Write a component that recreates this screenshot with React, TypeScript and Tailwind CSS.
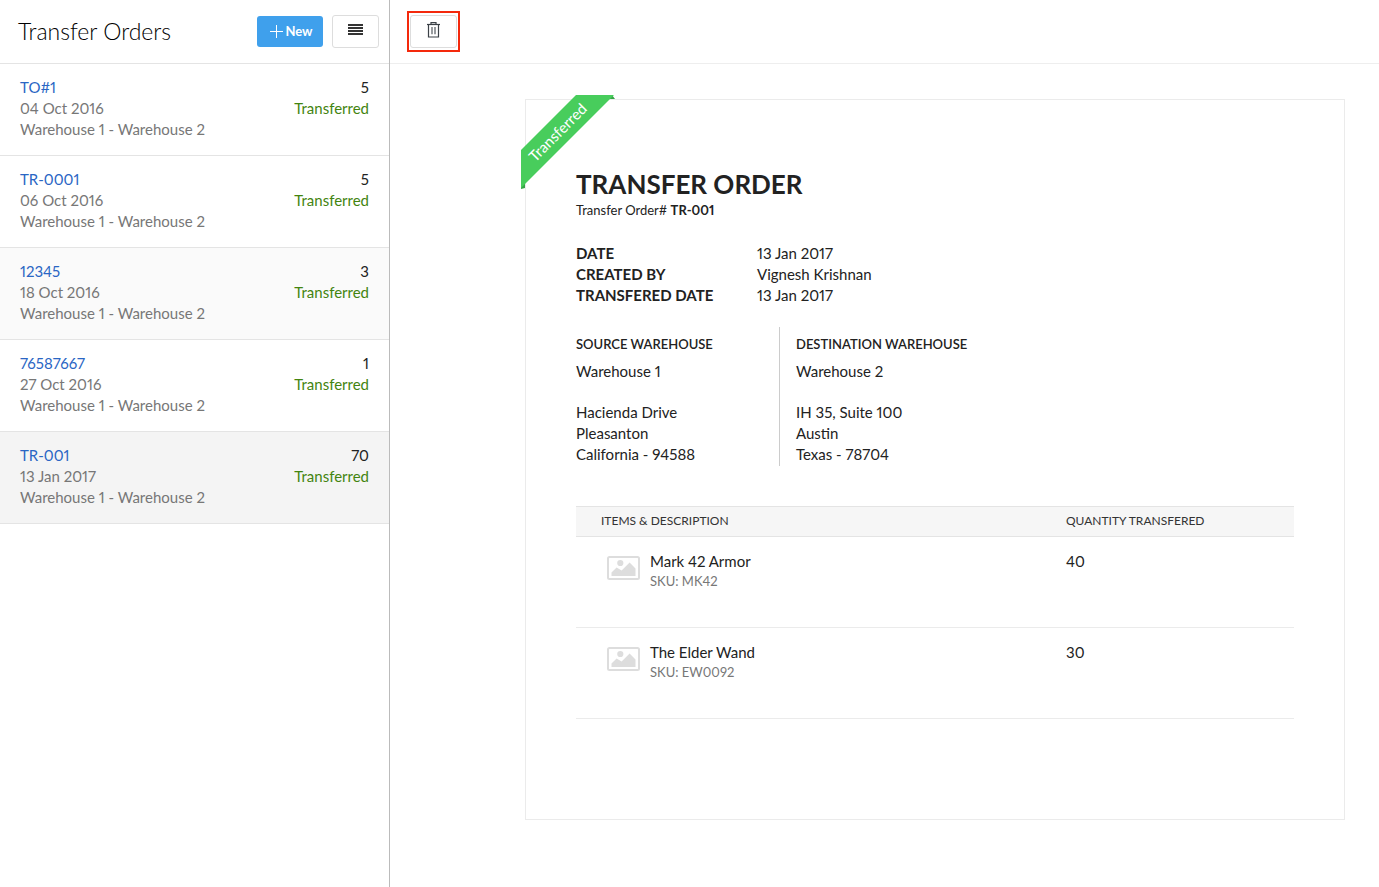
type Order = {
  id: string;
  date: string;
  quantity: number;
  rowClass: string;
};

const orders: Order[] = [
  { id: 'TO#1', date: '04 Oct 2016', quantity: 5, rowClass: 'bg-white' },
  { id: 'TR-0001', date: '06 Oct 2016', quantity: 5, rowClass: 'bg-white' },
  { id: '12345', date: '18 Oct 2016', quantity: 3, rowClass: 'bg-[#fafafa]' },
  { id: '76587667', date: '27 Oct 2016', quantity: 1, rowClass: 'bg-white' },
  { id: 'TR-001', date: '13 Jan 2017', quantity: 70, rowClass: 'bg-[#f4f4f4]' },
];

const details = [
  { label: 'DATE', value: '13 Jan 2017' },
  { label: 'CREATED BY', value: 'Vignesh Krishnan' },
  { label: 'TRANSFERED DATE', value: '13 Jan 2017' },
];

const items = [
  { name: 'Mark 42 Armor', sku: 'MK42', quantity: 40 },
  { name: 'The Elder Wand', sku: 'EW0092', quantity: 30 },
];

function PlusIcon() {
  return (
    <svg width="14" height="14" viewBox="0 0 14 14" aria-hidden="true">
      <path d="M7.5 0V13M1 6.5H14" stroke="#fff" strokeWidth="1" fill="none" />
    </svg>
  );
}

function MenuIcon() {
  return (
    <svg width="15" height="11" viewBox="0 0 15 11" aria-hidden="true">
      <path d="M0 1H15M0 4H15M0 7H15M0 10H15" stroke="#333" strokeWidth="1.8" fill="none" />
    </svg>
  );
}

function TrashIcon() {
  return (
    <svg width="13" height="16" viewBox="0 0 13 16" fill="none" aria-hidden="true">
      <path d="M0 2.5H13" stroke="#3b4147" strokeWidth="1.2" />
      <path d="M4 2.2V0.7H9V2.2" stroke="#3b4147" strokeWidth="1.2" />
      <path d="M1.5 2.5V15H11.5V2.5" stroke="#3b4147" strokeWidth="1.2" />
      <path d="M5 5V12.2M8 5V12.2" stroke="#6d7277" strokeWidth="1.4" />
    </svg>
  );
}

function ImagePlaceholder() {
  return (
    <svg width="33" height="25" viewBox="0 0 33 25" className="shrink-0" aria-hidden="true">
      <rect x="1" y="1" width="31" height="22" rx="1.5" fill="#fff" stroke="#ddd" strokeWidth="2" />
      <circle cx="13.3" cy="7" r="3.1" fill="#ddd" />
      <path d="M4.5 20V16.4L9.6 11.6L14.6 14.6L22.6 6.6L28.5 12.6V20Z" fill="#ddd" />
    </svg>
  );
}

function Ribbon() {
  return (
    <div className="absolute -top-[5px] -left-[5px] flex size-[94px]">
      <svg className="absolute inset-0" width="94" height="94" viewBox="0 0 94 94" aria-hidden="true">
        <path d="M86 0H91L94 4H86ZM0 86V91L0 94L4 93V86Z" fill="#36a446" />
        <path d="M55 0H92L93 0L0 93V55Z" fill="#48cd5c" />
      </svg>
      <span className="relative flex size-[73px] items-center justify-center">
        <span className="-rotate-45 text-[15px] leading-5 text-white">Transferred</span>
      </span>
    </div>
  );
}

export default function App() {
  return (
    <div className="flex min-h-screen bg-white font-['Lato',sans-serif] text-[15px] leading-[21px] text-[#222] proportional-nums">
      <aside className="w-[390px] shrink-0 border-r border-[#bbb]">
        <header className="flex h-16 items-center border-b border-[#e4e4e4] pr-[10px] pl-[18px]">
          <h1 className="flex-1 pb-0.5 text-[23px] leading-8 font-light text-black">Transfer Orders</h1>
          <button
            type="button"
            className="flex h-[31px] w-[66px] items-center justify-center gap-0.5 rounded-[3px] bg-[#3fa0ec] pl-0.5 text-[13px] font-bold text-white"
          >
            <PlusIcon />
            New
          </button>
          <button
            type="button"
            aria-label="More options"
            className="ml-[9px] flex h-[33px] w-[47px] items-center justify-center rounded-[3px] border border-[#ddd] pb-1"
          >
            <MenuIcon />
          </button>
        </header>
        <ul>
          {orders.map((order) => (
            <li key={order.id} className={`flex justify-between border-b border-[#e4e4e4] px-5 pt-[13px] pb-[15px] ${order.rowClass}`}>
              <div className="text-[#777]">
                <a href="#" className="block text-[#2a66c4]">{order.id}</a>
                <p>{order.date}</p>
                <p>Warehouse 1 - Warehouse 2</p>
              </div>
              <div className="text-right">
                <p>{order.quantity}</p>
                <p className="text-[#43840f]">Transferred</p>
              </div>
            </li>
          ))}
        </ul>
      </aside>

      <main className="min-w-0 flex-1">
        <header className="flex h-16 items-center border-b border-[#eee] pl-[17px]">
          <div className="border-2 border-[#f4290c] px-px py-0.5">
            <button
              type="button"
              aria-label="Delete"
              className="flex h-[33px] w-[47px] items-center justify-center rounded-[3px] border border-[#ddd] pb-1"
            >
              <TrashIcon />
            </button>
          </div>
        </header>

        <article className="relative mt-[35px] mr-[34px] mb-10 ml-[135px] border border-[#ebebeb] px-[50px] pt-[68px] pb-[100px]">
          <Ribbon />
          <h2 className="text-[26px] leading-8 font-bold">TRANSFER ORDER</h2>
          <p className="text-[13px] leading-5">
            Transfer Order# <strong className="font-bold">TR-001</strong>
          </p>

          <dl className="mt-[23px] grid grid-cols-[181px_1fr]">
            {details.map((detail) => (
              <div key={detail.label} className="contents">
                <dt className="font-bold">{detail.label}</dt>
                <dd>{detail.value}</dd>
              </div>
            ))}
          </dl>

          <div className="mt-[21px] flex">
            <section className="w-[204px] border-r border-[#ccc] pt-[7px] pb-px">
              <h3 className="text-[13px] leading-5 font-semibold">SOURCE WAREHOUSE</h3>
              <p className="mt-[7px]">Warehouse 1</p>
              <address className="mt-5 not-italic">
                Hacienda Drive
                <br />
                Pleasanton
                <br />
                California - 94588
              </address>
            </section>
            <section className="pt-[7px] pl-4">
              <h3 className="text-[13px] leading-5 font-semibold">DESTINATION WAREHOUSE</h3>
              <p className="mt-[7px]">Warehouse 2</p>
              <address className="mt-5 not-italic">
                IH 35, Suite 100
                <br />
                Austin
                <br />
                Texas - 78704
              </address>
            </section>
          </div>

          <table className="mt-10 w-full border-separate border-spacing-0 text-left">
            <thead>
              <tr className="bg-[#f6f6f6] text-[12px] text-[#333]">
                <th className="border-y border-[#e4e4e4] p-0 pb-0.5 pl-[25px] leading-[27px] font-normal">ITEMS &amp; DESCRIPTION</th>
                <th className="w-[228px] border-y border-[#e4e4e4] p-0 pb-0.5 leading-[27px] font-normal">QUANTITY TRANSFERED</th>
              </tr>
            </thead>
            <tbody>
              {items.map((item) => (
                <tr key={item.sku} className="h-[91px] align-top">
                  <td className="border-b border-[#ebebeb] p-0 pt-[14px] pl-[31px]">
                    <div className="flex gap-[10px]">
                      <div className="pt-[5px]">
                        <ImagePlaceholder />
                      </div>
                      <div>
                        <p>{item.name}</p>
                        <p className="text-[13px] leading-[18px] text-[#777]">SKU: {item.sku}</p>
                      </div>
                    </div>
                  </td>
                  <td className="border-b border-[#ebebeb] p-0 pt-[14px]">{item.quantity}</td>
                </tr>
              ))}
            </tbody>
          </table>
        </article>
      </main>
    </div>
  );
}
